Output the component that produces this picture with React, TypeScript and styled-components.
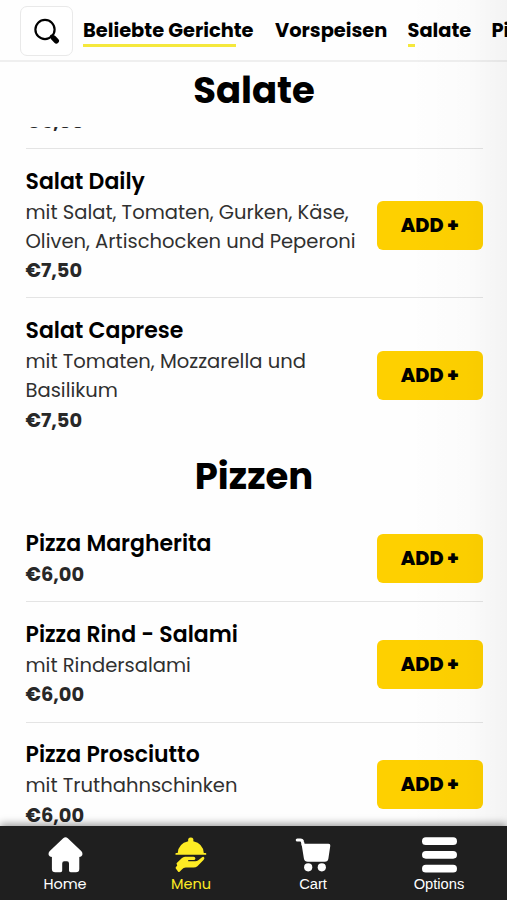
import React from 'react';
import styled, { createGlobalStyle } from 'styled-components';

const GlobalStyle = createGlobalStyle`
  * { box-sizing: border-box; }
  body {
    margin: 0;
    background: #fff;
    color: #000;
    font-family: Poppins, Inter, "Liberation Sans", sans-serif;
  }
`;

const Screen = styled.div`
  position: relative;
  display: flex;
  flex-direction: column;
  width: 507px;
  height: 900px;
  overflow: hidden;
  background: #fefefe;
`;

const TopBar = styled.header`
  display: flex;
  flex: none;
  align-items: flex-start;
  height: 62px;
  padding: 6px 0 0 19.5px;
  border-bottom: 2px solid #efefef;
  overflow: hidden;
`;

const SearchButton = styled.button`
  display: flex;
  flex: none;
  align-items: center;
  justify-content: center;
  width: 53.5px;
  height: 50px;
  margin-right: 10px;
  padding: 0;
  border: 1.5px solid #e9e9e9;
  border-radius: 7px;
  background: #fff;
`;

const Categories = styled.nav`
  display: flex;
  flex: none;
  gap: 20px;
  padding-top: 9px;
`;

const Category = styled.a<{ $width: number; $line?: number }>`
  flex: none;
  width: ${(p) => p.$width}px;
  height: 32px;
  background: linear-gradient(#f5e83c, #f5e83c) left bottom / ${(p) => p.$line ?? 0}px 3px no-repeat;
  font-size: 19.4px;
  font-weight: 700;
  line-height: 31px;
  white-space: nowrap;
`;

const MenuList = styled.main`
  flex: 1;
  min-height: 0;
  padding: 0 24.5px 0 25.5px;
  overflow: hidden;
`;

const SectionTitle = styled.h2<{ $height: number }>`
  height: ${(p) => p.$height}px;
  margin: 0;
  padding-top: 2.6px;
  font-size: 37px;
  font-weight: 700;
  line-height: 50px;
  text-align: center;
`;

const CutRow = styled.div`
  display: flex;
  flex-direction: column;
  justify-content: flex-end;
  height: 22px;
  padding-bottom: 11.6px;
  border-bottom: 1px solid #e4e4e4;
  overflow: hidden;
`;

const Row = styled.article<{ $last?: boolean }>`
  display: flex;
  align-items: center;
  justify-content: space-between;
  padding: 16.6px 0 12px;
  border-bottom: 1px solid ${(p) => (p.$last ? 'transparent' : '#e4e4e4')};
`;

const Name = styled.h3`
  margin: 0;
  font-size: 22px;
  font-weight: 600;
  line-height: 32px;
  white-space: nowrap;
`;

const Detail = styled.div`
  color: #303030;
  font-size: 19.55px;
  line-height: 29.3px;
  white-space: nowrap;
`;

const Price = styled.div`
  flex: none;
  color: #282828;
  font-size: 19.4px;
  font-weight: 700;
  line-height: 29.3px;
`;

const AddButton = styled.button`
  flex: none;
  width: 105.5px;
  height: 49px;
  padding: 0;
  border: 0;
  border-radius: 6px;
  background: #fed000;
  color: #000;
  font: 800 19.3px/49px Poppins, Inter, sans-serif;
`;

const EdgeShade = styled.div`
  position: absolute;
  top: 0;
  right: 0;
  width: 100px;
  height: 826px;
  background: linear-gradient(90deg, rgba(0, 0, 0, 0), rgba(0, 0, 0, 0.012) 60%, rgba(0, 0, 0, 0.045));
  pointer-events: none;
`;

const BottomNav = styled.nav`
  position: relative;
  display: grid;
  flex: none;
  grid-template-columns: 128px 124px 120px 132px;
  height: 74px;
  padding: 11px 2px 0 1px;
  background: #1f1f1f;
  box-shadow: 0 -2px 8px rgba(0, 0, 0, 0.4);
`;

const Tab = styled.a<{ $active?: boolean; $plain?: boolean }>`
  display: flex;
  flex-direction: column;
  align-items: center;
  color: ${(p) => (p.$active ? '#fdeb24' : '#fff')};
  font-family: ${(p) => (p.$plain ? '"Liberation Sans", Arial' : 'Poppins, Inter')}, sans-serif;
  font-size: ${(p) => (p.$plain ? 14.7 : 14.5)}px;
  line-height: 20px;

  svg {
    display: block;
    margin-bottom: 1px;
  }
`;

type Item = { name: string; details: string[]; price: string };

const salads: Item[] = [
  {
    name: 'Salat Daily',
    details: ['mit Salat, Tomaten, Gurken, Käse,', 'Oliven, Artischocken und Peperoni'],
    price: '€7,50',
  },
  {
    name: 'Salat Caprese',
    details: ['mit Tomaten, Mozzarella und', 'Basilikum'],
    price: '€7,50',
  },
];

const pizzas: Item[] = [
  { name: 'Pizza Margherita', details: [], price: '€6,00' },
  { name: 'Pizza Rind - Salami', details: ['mit Rindersalami'], price: '€6,00' },
  { name: 'Pizza Prosciutto', details: ['mit Truthahnschinken'], price: '€6,00' },
];

const Dish = ({ item, last }: { item: Item; last?: boolean }) => (
  <Row $last={last}>
    <div>
      <Name>{item.name}</Name>
      {item.details.map((text) => (
        <Detail key={text}>{text}</Detail>
      ))}
      <Price>{item.price}</Price>
    </div>
    <AddButton>ADD +</AddButton>
  </Row>
);

const SearchIcon = () => (
  <svg width="28" height="28" viewBox="0 0 28 28" fill="none" stroke="#000" strokeLinecap="round">
    <circle cx="13" cy="12.5" r="9.6" strokeWidth="2.2" />
    <path d="M19.5 19l2 2" strokeWidth="3" />
    <path d="M21.7 21.2l2.6 2.6" strokeWidth="5.4" />
  </svg>
);

const HomeIcon = () => (
  <svg width="35" height="36" viewBox="0 0 35 36" fill="currentColor">
    <path d="M15.2 1.3Q17.5-.6 19.8 1.3L33.2 14Q35 15.8 34.2 18.2Q33.4 20 31.3 20V32Q31.3 35.3 28 35.3H22.7Q21 35.3 21 33.6V26.5Q21 24.3 19 24.3H16.2Q14.2 24.3 14.2 26.5V33.6Q14.2 35.3 12.5 35.3H7.2Q3.9 35.3 3.9 32V20Q1.6 20 .8 18.2Q0 15.8 1.8 14Z" />
  </svg>
);

const ServeIcon = () => (
  <svg width="32" height="36" viewBox="0 0 32 36" fill="currentColor">
    <path d="M13.2 4.2Q12.5.7 15.8.5Q19.1.7 18.3 4.2Q28.2 6.5 28.8 16H30.5Q31.3 16 31.3 16.9T30.5 17.8H1.2Q.4 17.8.4 16.9T1.2 16H2.7Q3.3 6.5 13.2 4.2Z" />
    <path d="M1.5 26.3L6.7 21.3Q8.2 19.8 10 19.8H18.5Q20.4 19.8 20.4 21.4T18.5 23H13.2V24.3H20.2Q22 24.3 23.3 23.2L26.7 20.4Q28.4 19.3 29.2 20.4Q29.8 21.5 28.5 23L22.4 29.2Q20.8 30.6 18.6 30.6H10.8Q8.3 30.6 7.1 32.2L4.6 34.7Q3.8 35.4 3 34.5L.8 31.5Q.2 30.7 1.1 29.8L2.2 28.7Z" />
  </svg>
);

const CartIcon = () => (
  <svg width="36" height="36" viewBox="0 0 36 36" fill="currentColor">
    <path d="M2.3 3H5.4Q7.2 3 7.5 4.8L8.2 8" fill="none" stroke="currentColor" strokeWidth="3.2" strokeLinecap="round" />
    <path d="M6.5 6.8H33.5Q35.6 6.8 35.3 8.8L33.4 21.5Q32.9 24.7 29.8 24.7H12.8Q9.5 24.7 8.9 21.5Z" />
    <circle cx="13.2" cy="30.3" r="4.1" />
    <circle cx="26.8" cy="30.3" r="4.1" />
  </svg>
);

const BarsIcon = () => (
  <svg width="35" height="36" viewBox="0 0 35 36" fill="currentColor">
    <rect y=".3" width="35" height="7.7" rx="3.85" />
    <rect y="14" width="35" height="7.7" rx="3.85" />
    <rect y="27.8" width="35" height="7.7" rx="3.85" />
  </svg>
);

export default function App() {
  return (
    <Screen>
      <GlobalStyle />
      <TopBar>
        <SearchButton aria-label="Suche"><SearchIcon /></SearchButton>
        <Categories>
          <Category $width={172} $line={153}>Beliebte Gerichte</Category>
          <Category $width={112.5}>Vorspeisen</Category>
          <Category $width={64} $line={7}>Salate</Category>
          <Category $width={66}>Pizzen</Category>
        </Categories>
      </TopBar>
      <MenuList>
        <SectionTitle $height={65}>Salate</SectionTitle>
        <CutRow><Price>€6,00</Price></CutRow>
        <Dish item={salads[0]} />
        <Dish item={salads[1]} last />
        <SectionTitle $height={63.6}>Pizzen</SectionTitle>
        {pizzas.map((item) => <Dish key={item.name} item={item} />)}
      </MenuList>
      <EdgeShade />
      <BottomNav>
        <Tab><HomeIcon />Home</Tab>
        <Tab $active><ServeIcon />Menu</Tab>
        <Tab $plain><CartIcon />Cart</Tab>
        <Tab $plain><BarsIcon />Options</Tab>
      </BottomNav>
    </Screen>
  );
}
